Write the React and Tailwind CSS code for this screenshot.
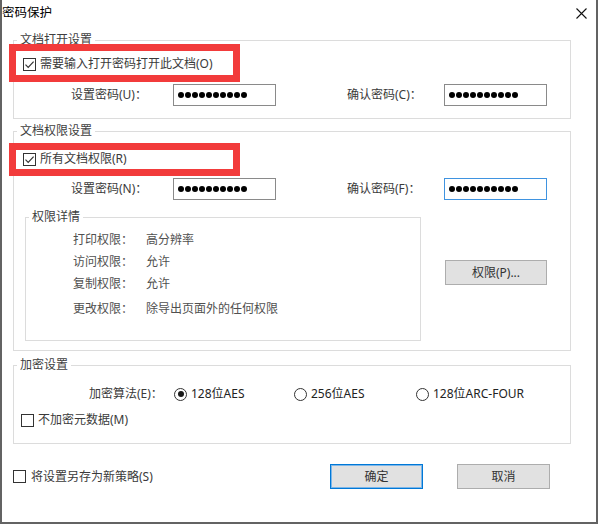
import React from "react";

const Check = ({ checked }) => (
  <span className="w-[13px] h-[13px] shrink-0 border border-[#333] bg-white flex items-center justify-center">
    {checked && (
      <svg width="11" height="11" viewBox="0 0 11 11">
        <path d="M1.5 5.6 L4.2 8.3 L9.6 2.6" fill="none" stroke="#333" strokeWidth="1.2" />
      </svg>
    )}
  </span>
);

const Radio = ({ on }) => (
  <span className="w-[13px] h-[13px] shrink-0 rounded-full border border-[#333] bg-white flex items-center justify-center">
    {on && <span className="w-[6px] h-[6px] rounded-full bg-[#1a1a1a]" />}
  </span>
);

const PwdBox = ({ focused }) => (
  <div
    className={`w-[103px] h-[22px] border flex items-center pl-[4px] gap-[1px] ${
      focused ? "border-[#3f93e0]" : "border-[#8a8a8a]"
    }`}
  >
    {Array.from({ length: 10 }).map((_, i) => (
      <span key={i} className="w-[6px] h-[6px] rounded-full bg-black" />
    ))}
  </div>
);

const Legend = ({ children }) => (
  <div className="-mt-[8px] ml-[3px] px-[3px] w-fit bg-white leading-[14px] text-[#404040]">{children}</div>
);

const PwdRow = ({ left, right, focused }) => (
  <div className="flex items-center h-[22px]">
    <span className="ml-[57px] w-[102px]">{left}</span>
    <PwdBox />
    <span className="ml-[71px] w-[97px]">{right}</span>
    <PwdBox focused={focused} />
  </div>
);

const details = [
  ["打印权限：", "高分辨率", "mt-[9px]"],
  ["访问权限：", "允许", "mt-[8px]"],
  ["复制权限：", "允许", "mt-[8px]"],
  ["更改权限：", "除导出页面外的任何权限", "mt-[11px]"],
];

export default function App() {
  return (
    <div className="relative w-[598px] h-[524px] bg-white border-x-2 border-b-2 border-[#636363] text-[12px] text-[#3a3a3a] font-['Noto_Sans','Noto_Sans_CJK_SC',sans-serif]">
      {/* title bar */}
      <div className="h-[26px] flex items-center justify-between">
        <span className="text-[12.5px] text-black leading-[14px]">密码保护</span>
        <svg className="mr-[9px] mt-[1px]" width="11" height="11" viewBox="0 0 11 11">
          <path d="M0.5 0.5 L10.5 10.5 M10.5 0.5 L0.5 10.5" stroke="#111" strokeWidth="1.1" />
        </svg>
      </div>

      {/* 文档打开设置 */}
      <div className="mt-[14px] ml-[11px] w-[558px] h-[79px] border border-[#dcdcdc]">
        <Legend>文档打开设置</Legend>
        <div className="mt-[10px] ml-[9px] h-[14px] flex items-center gap-[4px] leading-[14px]">
          <Check checked />
          <span>需要输入打开密码打开此文档(O)</span>
        </div>
        <div className="mt-[13px]">
          <PwdRow left="设置密码(U)：" right="确认密码(C)：" />
        </div>
      </div>

      {/* 文档权限设置 */}
      <div className="mt-[12px] ml-[11px] w-[558px] h-[220px] border border-[#dcdcdc]">
        <Legend>文档权限设置</Legend>
        <div className="mt-[14px] ml-[9px] h-[14px] flex items-center gap-[4px] leading-[14px]">
          <Check checked />
          <span>所有文档权限(R)</span>
        </div>
        <div className="mt-[12px]">
          <PwdRow left="设置密码(N)：" right="确认密码(F)：" focused />
        </div>
        <div className="mt-[17px] flex items-start">
          <div className="ml-[11px] w-[396px] h-[124px] border border-[#dcdcdc]">
            <Legend>权限详情</Legend>
            {details.map(([k, v, m]) => (
              <div key={k} className={`${m} flex leading-[14px] text-[#505050]`}>
                <span className="ml-[47px] w-[73px]">{k}</span>
                <span>{v}</span>
              </div>
            ))}
          </div>
          <button className="ml-[24px] mt-[43px] w-[102px] h-[25px] bg-[#e1e1e1] border border-[#adadad] text-[#333] leading-[14px]">
            权限(P)...
          </button>
        </div>
      </div>

      {/* 加密设置 */}
      <div className="mt-[14px] ml-[11px] w-[558px] h-[79px] border border-[#dcdcdc]">
        <Legend>加密设置</Legend>
        <div className="mt-[15px] h-[14px] flex items-center leading-[14px]">
          <span className="ml-[75px] w-[85px]">加密算法(E)：</span>
          <div className="w-[120px] flex items-center gap-[4px] text-[#222]">
            <Radio on />
            <span>128位AES</span>
          </div>
          <div className="w-[122px] flex items-center gap-[4px] text-[#222]">
            <Radio />
            <span>256位AES</span>
          </div>
          <div className="flex items-center gap-[4px] text-[#222]">
            <Radio />
            <span>128位ARC-FOUR</span>
          </div>
        </div>
        <div className="mt-[12px] ml-[7px] h-[14px] flex items-center gap-[4px] leading-[14px]">
          <Check />
          <span>不加密元数据(M)</span>
        </div>
      </div>

      {/* bottom row */}
      <div className="mt-[20px] h-[25px] flex items-center">
        <div className="ml-[11px] flex items-center gap-[5px] leading-[14px]">
          <Check />
          <span>将设置另存为新策略(S)</span>
        </div>
        <div className="ml-auto mr-[46px] flex gap-[34px]">
          <button className="w-[93px] h-[25px] bg-[#e1e1e1] border border-[#0078d7] shadow-[inset_0_0_0_1px_#7db6e8] text-[#333]">
            确定
          </button>
          <button className="w-[93px] h-[25px] bg-[#e1e1e1] border border-[#adadad] text-[#333]">取消</button>
        </div>
      </div>

      {/* red annotation frames */}
      <div className="absolute left-[7px] top-[44px] w-[231px] h-[38px] border-[7px] border-[#f23b3b]" />
      <div className="absolute left-[7px] top-[143px] w-[231px] h-[33px] border-[7px] border-[#f23b3b]" />
    </div>
  );
}
